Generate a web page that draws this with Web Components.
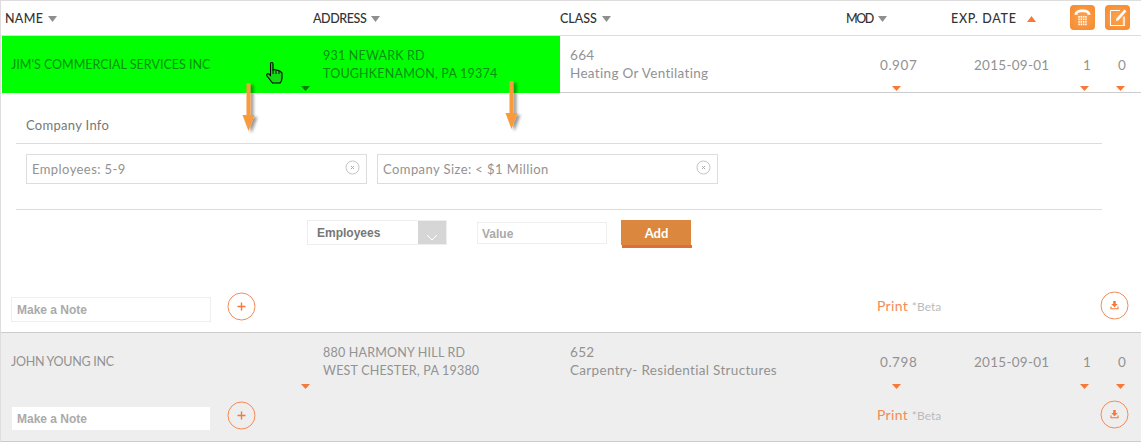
<!DOCTYPE html>
<html><head><meta charset="utf-8"><style>
html,body{margin:0;padding:0;background:#fff}
body{font:13px Lato,sans-serif;color:#999}
</style></head><body>
<lead-table></lead-table>
<script>
const F='Lato,"Noto Sans",sans-serif';
const caret=c=>`<svg width="9" height="5" viewBox="0 0 9 5" style="display:block"><path d="M0 0H9L4.5 5Z" fill="${c}"/></svg>`;
class SortHead extends HTMLElement{
 constructor(){super();const up=this.hasAttribute('up');this.attachShadow({mode:'open'}).innerHTML=`<style>
 :host{display:inline-flex;align-items:center;gap:${up?10:5}px;color:#333;font:500 12.5px ${F};letter-spacing:var(--ls,0)}
 svg{margin-top:2px}</style><slot></slot><svg width="9" height="6" viewBox="0 0 9 6"><path d="${up?'M0 6H9L4.5 0Z':'M0 0H9L4.5 6Z'}" fill="${up?'#f47a3a':'#8f8f8f'}"/></svg>`}
}
class IconBtn extends HTMLElement{
 constructor(){super();const k=this.getAttribute('kind');
 const icons={phone:`<path d="M4.500 9.800C4.500 6 8 4.400 12.500 4.400S20.500 6 20.500 9.800L17.300 9.800V8C15 7 10 7 7.700 8V9.800Z" fill="#fff"/><g fill="#fff">${[0,1,2,3].map(r=>[0,1,2,3].map(c=>`<rect x="${8.3+c*2.3}" y="${11+r*2.5}" width="1.500" height="1.700"/>`).join('')).join('')}</g>`,
 note:`<path d="M5.500 5.500H15M5.500 5.500V20.500H19.500V12" fill="none" stroke="#fff" stroke-width="1.100"/><path d="M18.800 20V11.500" stroke="#fde3c8" stroke-width="2"/><path d="M11.500 13.500L19.500 4.500L21.500 6.300L13.500 15.300L11 16Z" fill="#fff"/>`};
 this.attachShadow({mode:'open'}).innerHTML=`<style>:host{display:block;width:25px;height:25px;border-radius:4px;background:radial-gradient(circle,#fca24f,#f58a2f)}svg{display:block}</style><svg width="25" height="25" viewBox="0 0 25 25">${icons[k]}</svg>`}
}
class RoundBtn extends HTMLElement{
 constructor(){super();const k=this.getAttribute('kind');
 const g=k==='plus'?`<path d="M14.500 10.500V18.500M10.500 14.500H18.500" stroke="#f4793b" stroke-width="1.400" fill="none"/>`:`<path d="M13.200 10H15.800V13H17.800L14.500 16.300L11.200 13H13.200Z" fill="#f4793b"/><path d="M11 15.500V17.800H18V15.500" fill="none" stroke="#f4793b" stroke-width="1.100"/>`;
 this.attachShadow({mode:'open'}).innerHTML=`<style>:host{display:block;width:29px;height:29px}svg{display:block}</style><svg width="29" height="29" viewBox="0 0 29 29"><circle cx="14.500" cy="14.500" r="13.500" fill="none" stroke="#f58a55" stroke-width="1"/>${g}</svg>`}
}
class FilterChip extends HTMLElement{
 constructor(){super();this.attachShadow({mode:'open'}).innerHTML=`<style>
 :host{box-sizing:border-box;display:flex;align-items:center;justify-content:space-between;width:341px;height:30px;border:1px solid #ddd;padding:0 6px 0 5px;font:13px ${F};color:#929292;letter-spacing:.42px}
 svg{display:block;margin-top:-4px}</style><span><slot></slot></span><svg width="15" height="15" viewBox="0 0 15 15"><circle cx="7.500" cy="7.500" r="6.500" fill="none" stroke="#c4c4c4"/><path d="M6 6L9 9M9 6L6 9" stroke="#aaa"/></svg>`}
}
class NoteBar extends HTMLElement{
 constructor(){super();this.attachShadow({mode:'open'}).innerHTML=`<style>
 :host{display:flex;align-items:flex-start;box-sizing:border-box;padding:var(--t,2px) 11px 0 10px}
 .note{box-sizing:border-box;width:200px;height:25px;border:1px solid #eee;background:#fff;font:bold 12px/24px "Liberation Sans",sans-serif;color:#aaa;padding:0 5px;margin-top:5px}
 round-btn{margin-left:16px}
 .print{margin-left:621px;font:14px/27px ${F};color:#f58a55;letter-spacing:.3px;width:223px}
 .print span{font-size:12px;color:#bbb;letter-spacing:0}
 </style><div class="note">Make a Note</div><round-btn kind="plus"></round-btn><div class="print">Print <span>*Beta</span></div><round-btn kind="down" style="margin:-1px 0 0"></round-btn>`}
}
class DataRow extends HTMLElement{
 constructor(){super();const a=n=>this.getAttribute(n);const hi=this.hasAttribute('hi');const cc=hi?'#0a7a0a':'#f4793b';
 this.attachShadow({mode:'open'}).innerHTML=`<style>
 :host{display:grid;grid-template-columns:312px 246px 310px 94px 108px 36px 1fr;height:56px;font:13.5px/18px ${F};letter-spacing:.28px;color:#929292;position:relative}
 .c{position:relative;display:flex;flex-direction:column;justify-content:center;padding-top:1px;box-sizing:border-box}
 .name,.addr{${hi?'background:#0f0;color:#0a8f14;margin-bottom:-1px;':''}font-size:12.5px}
 .name{padding-left:9px;letter-spacing:${a('ls')||0}px}.addr{padding-left:9px;letter-spacing:.2px}.cls{padding:0 0 1px 10px;letter-spacing:.32px}
 .mod{padding-left:10px;letter-spacing:.55px}.date{padding-left:10px}.n{padding-left:11px}
 .k{position:absolute;bottom:1px;display:block}
 </style>
 <div class="c name">${a('name')}<span class="k" style="right:4px;${hi?'bottom:2px':''}">${caret(cc)}</span></div>
 <div class="c addr"><span>${a('a1')}</span><span>${a('a2')}</span></div>
 <div class="c cls"><span>${a('c1')}</span><span>${a('c2')}</span></div>
 <div class="c mod">${a('mod')}<span class="k" style="left:22px">${caret('#f4793b')}</span></div>
 <div class="c date">${a('date')}</div>
 <div class="c n">1<span class="k" style="left:8px">${caret('#f4793b')}</span></div>
 <div class="c n" style="padding-left:10px">0<span class="k" style="left:8px">${caret('#f4793b')}</span></div>`}
}
class DetailPanel extends HTMLElement{
 constructor(){super();this.attachShadow({mode:'open'}).innerHTML=`<style>
 :host{display:block;box-sizing:border-box;height:197px;padding:0 0 0 15px}
 .t{font:13px ${F};color:#777;letter-spacing:.3px;padding:24px 0 0 10px;height:51px;box-sizing:border-box;border-bottom:1px solid #ddd;width:1086px}
 .chips{display:flex;gap:10px;padding:10px 0 0 10px;height:66px;box-sizing:border-box;border-bottom:1px solid #ddd;width:1086px}
 .form{display:flex;align-items:flex-start;padding:10px 0 0 291px}
 .sel{box-sizing:border-box;width:140px;height:25px;border:1px solid #eee;display:flex;justify-content:space-between;font:bold 12px/24px "Liberation Sans",sans-serif;color:#777;padding-left:9px}
 .arr{width:28px;background:#d6d6d6;height:23px;display:flex;align-items:center;justify-content:center}
 .val{box-sizing:border-box;width:130px;height:22px;margin:2px 14px 0 30px;border:1px solid #eee;font:bold 12px/22px "Liberation Sans",sans-serif;color:#aaa;padding-left:4px}
 .add{box-sizing:border-box;width:71px;height:28px;background:linear-gradient(#db873d,#db873d) no-repeat 0 0/70px 25px,linear-gradient(#df6f38,#df6f38) no-repeat 1px 25px/70px 3px;color:#fff;font:bold 13px/26px ${F};text-align:center}
 </style>
 <div class="t">Company Info</div>
 <div class="chips"><filter-chip>Employees: 5-9</filter-chip><filter-chip>Company Size: &lt; $1 Million</filter-chip></div>
 <div class="form"><div class="sel">Employees<div class="arr"><svg width="12" height="7" viewBox="0 0 12 7" style="margin-top:9px"><path d="M1 1L6 6L11 1" fill="none" stroke="#fff"/></svg></div></div><div class="val">Value</div><div class="add">Add</div></div>`}
}
class LeadTable extends HTMLElement{
 constructor(){super();this.attachShadow({mode:'open'}).innerHTML=`<style>
 :host{display:block;position:relative;width:1141px;height:442px;box-sizing:border-box;border-top:1px solid #ddd;border-left:1px solid #ddd;overflow:hidden}
 header{display:grid;grid-template-columns:308px 247px 286px 105px 119px 35px 1fr;align-items:center;height:34px;padding-left:4px;border-bottom:1px solid #ddd;box-sizing:content-box}
 icon-btn{align-self:start;margin-top:4px}
 .r1{border-bottom:1px solid #ccc;margin-left:1px}
 .exp{display:block;box-sizing:border-box;height:240px;border-bottom:1px solid #ccc}
 .g{background:#eee;height:109px;border-bottom:1px solid #ccc;box-sizing:border-box}
 .g data-row{margin-left:1px;height:57px}
 .ov{position:absolute}
 </style>
 <header><sort-head style="--ls:.3px">NAME</sort-head><sort-head style="--ls:-.4px">ADDRESS</sort-head><sort-head>CLASS</sort-head><sort-head style="--ls:-1.5px">MOD</sort-head><sort-head up style="--ls:.7px">EXP. DATE</sort-head><icon-btn kind="phone"></icon-btn><icon-btn kind="note"></icon-btn></header>
 <data-row class="r1" hi name="JIM'S COMMERCIAL SERVICES INC" a1="931 NEWARK RD" a2="TOUGHKENAMON, PA 19374" c1="664" c2="Heating Or Ventilating" mod="0.907" date="2015-09-01"></data-row>
 <div class="exp"><detail-panel></detail-panel><note-bar style="--t:2px"></note-bar></div>
 <div class="g"><data-row ls="-.3" name="JOHN YOUNG INC" a1="880 HARMONY HILL RD" a2="WEST CHESTER, PA 19380" c1="652" c2="Carpentry- Residential Structures" mod="0.798" date="2015-09-01"></data-row><note-bar style="--t:11px"></note-bar></div>
 <svg class="ov" style="left:239px;top:80px" width="24" height="54" viewBox="0 0 24 54"><defs><filter id="s" x="-50%" y="-20%" width="200%" height="140%"><feDropShadow dx="3" dy="2" stdDeviation="1.500" flood-color="#000" flood-opacity=".4"/></filter></defs><path d="M6.500 2H10.500V34H14.500L8.500 50L2.500 34H6.500Z" fill="#f99a3c" filter="url(#s)"/></svg>
 <svg class="ov" style="left:502px;top:78px" width="24" height="54" viewBox="0 0 24 54"><path d="M6.500 2H10.500V34H14.500L8.500 50L2.500 34H6.500Z" fill="#f99a3c" filter="url(#s)"/></svg>
 <svg class="ov" style="left:264px;top:60px" width="20" height="24" viewBox="0 0 20 24"><path d="M5.500 2C6.500 1 8 1.500 8 3V9L9.500 8.500L11.500 9L13.500 9.500L15.500 10.500L17 12V17C17 19 16 21 15 22H7.500L2 15C1 13.500 2.500 12 4 13L5.500 14.500Z" fill="#14d914" stroke="#000" stroke-width="1.100"/><path d="M8 9V13M11 9V13M14 10V13" stroke="#000" stroke-width=".9"/></svg>
 `}
}
[['sort-head',SortHead],['icon-btn',IconBtn],['round-btn',RoundBtn],['filter-chip',FilterChip],['note-bar',NoteBar],['data-row',DataRow],['detail-panel',DetailPanel],['lead-table',LeadTable]].forEach(([n,c])=>customElements.define(n,c));
</script></body></html>
